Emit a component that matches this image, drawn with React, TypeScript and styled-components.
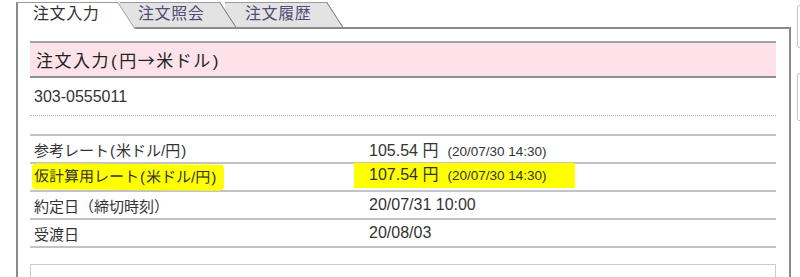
import React from 'react';
import styled, { createGlobalStyle } from 'styled-components';

const FONT = `"Liberation Sans", "Noto Sans CJK JP", sans-serif`;

const GlobalStyle = createGlobalStyle`
  html, body {
    margin: 0;
    padding: 0;
    background: #fff;
    overflow: hidden;
  }
  body {
    font-family: ${FONT};
    color: #333;
  }
`;

const Page = styled.div`
  display: flex;
  align-items: flex-start;
  width: 800px;
  height: 277px;
  overflow: hidden;
  padding: 2px 0 0 16px;
  box-sizing: border-box;
`;

const Main = styled.div`
  width: 775px;
  flex-shrink: 0;
`;

const TabBar = styled.div`
  display: flex;
  align-items: flex-start;
  height: 25px;
  position: relative;
  z-index: 2;
`;

interface TabProps {
  $active?: boolean;
  $width: number;
  $z: number;
  $gap?: number;
  $pad: number;
}

const Tab = styled.div<TabProps>`
  position: relative;
  z-index: ${p => p.$z};
  flex-shrink: 0;
  width: ${p => p.$width}px;
  height: ${p => (p.$active ? 27 : 25)}px;
  margin-left: ${p => p.$gap || 0}px;
  box-sizing: border-box;
  border-top: 1px solid #9a9a9a;
  border-left: ${p => (p.$active ? '2px solid #8a8a8a' : 'none')};
  background: ${p => (p.$active ? '#fff' : '#e3e3e3')};
  padding-left: ${p => p.$pad}px;
  font-size: 16px;
  letter-spacing: 0.6px;
  line-height: 22px;
  color: ${p => (p.$active ? '#333' : '#4d4d75')};

  &::after {
    content: '';
    position: absolute;
    top: -1px;
    right: 0;
    width: 24px;
    height: calc(100% + 1px);
    box-sizing: border-box;
    background: inherit;
    border-top: 1px solid #9a9a9a;
    border-right: 1px solid ${p => (p.$active ? '#9a9a9a' : '#707070')};
    transform-origin: top;
    transform: skewX(33deg);
  }
`;

const TabLabel = styled.span`
  position: relative;
  z-index: 1;
`;

const Panel = styled.div`
  position: relative;
  z-index: 1;
  box-sizing: border-box;
  width: 775px;
  height: 260px;
  border: 2px solid #8a8a8a;
  border-bottom: none;
  padding: 12px 13px 0 12px;
`;

const Title = styled.h2`
  margin: 0;
  height: 33px;
  line-height: 33px;
  border-top: 2px solid #a3a3a3;
  border-bottom: 2px solid #8f8f8f;
  background: #fde3e9;
  padding-left: 6px;
  font-size: 17px;
  letter-spacing: 1.5px;
  font-weight: normal;
  color: #222;
`;

const Arrow = styled.span`
  font-family: "Noto Sans CJK JP", sans-serif;
`;

const Paren = styled.span`
  margin: 0 1px;
`;

const OrderNo = styled.div`
  height: 37px;
  line-height: 38px;
  padding-left: 4px;
  font-size: 16px;
  color: #333;
  border-bottom: 1px dotted #b8b8b8;
`;

const Table = styled.div`
  margin-top: 18px;
  border-top: 2px solid #c3c3c3;
`;

const Row = styled.div`
  display: grid;
  grid-template-columns: 339px 1fr;
  align-items: center;
  height: 26px;
  border-bottom: 2px solid #c3c3c3;
`;

const Label = styled.div`
  padding-left: 4px;
  font-size: 15px;
  color: #333;
  white-space: nowrap;
`;

const Value = styled.div`
  font-size: 16px;
  color: #333;
  white-space: nowrap;
`;

const DateNote = styled.span`
  font-size: 13.5px;
  margin-left: 9px;
`;

const LabelMark = styled.span`
  display: inline-block;
  margin-left: -2px;
  padding: 0 7px 0 2px;
  line-height: 26px;
  background: #ffff00;
  border-radius: 6px 2px 5px 3px / 3px 7px 4px 6px;
  transform: rotate(0.4deg);
`;

const ValueMark = styled.span`
  display: inline-block;
  margin: -3px 0 0 -15px;
  padding: 0 29px 0 15px;
  line-height: 24px;
  background: #ffff00;
`;

const Box = styled.div`
  margin-top: 16px;
  height: 60px;
  border: 1px solid #cccccc;
`;

const Side = styled.div`
  margin-left: 6px;
  display: flex;
  flex-direction: column;
  gap: 25px;
  padding-top: 3px;
`;

const SideBox = styled.div<{ $h: number }>`
  width: 24px;
  height: ${p => p.$h}px;
  box-sizing: border-box;
  border: 1px solid #c8c8c8;
  border-radius: 2px;
`;

const RateLabel = ({ name, unit }: { name: string; unit: string }) => (
  <>
    {name}
    <Paren>(</Paren>
    {unit}
    <Paren>)</Paren>
  </>
);

const rates = [
  { name: '参考レート', rate: '105.54', date: '(20/07/30 14:30)', mark: false },
  { name: '仮計算用レート', rate: '107.54', date: '(20/07/30 14:30)', mark: true },
];

export default function App() {
  return (
    <>
      <GlobalStyle />
      <Page>
        <Main>
          <TabBar>
            <Tab $active $width={102} $z={3} $pad={15}>
              <TabLabel>注文入力</TabLabel>
            </Tab>
            <Tab $width={100} $z={2} $gap={2} $pad={18}>
              <TabLabel>注文照会</TabLabel>
            </Tab>
            <Tab $width={102} $z={1} $gap={5} $pad={20}>
              <TabLabel>注文履歴</TabLabel>
            </Tab>
          </TabBar>
          <Panel>
            <Title>
              注文入力<Paren>(</Paren>円<Arrow>→</Arrow>米ドル<Paren>)</Paren>
            </Title>
            <OrderNo>303-0555011</OrderNo>
            <Table>
              {rates.map(r => (
                <Row key={r.name}>
                  <Label>
                    {r.mark ? (
                      <LabelMark>
                        <RateLabel name={r.name} unit="米ドル/円" />
                      </LabelMark>
                    ) : (
                      <RateLabel name={r.name} unit="米ドル/円" />
                    )}
                  </Label>
                  <Value>
                    {r.mark ? (
                      <ValueMark>
                        {r.rate} 円<DateNote>{r.date}</DateNote>
                      </ValueMark>
                    ) : (
                      <>
                        {r.rate} 円<DateNote>{r.date}</DateNote>
                      </>
                    )}
                  </Value>
                </Row>
              ))}
              <Row>
                <Label>約定日（締切時刻）</Label>
                <Value>20/07/31 10:00</Value>
              </Row>
              <Row>
                <Label>受渡日</Label>
                <Value>20/08/03</Value>
              </Row>
            </Table>
            <Box />
          </Panel>
        </Main>
        <Side>
          <SideBox $h={43} />
          <SideBox $h={48} />
        </Side>
      </Page>
    </>
  );
}
